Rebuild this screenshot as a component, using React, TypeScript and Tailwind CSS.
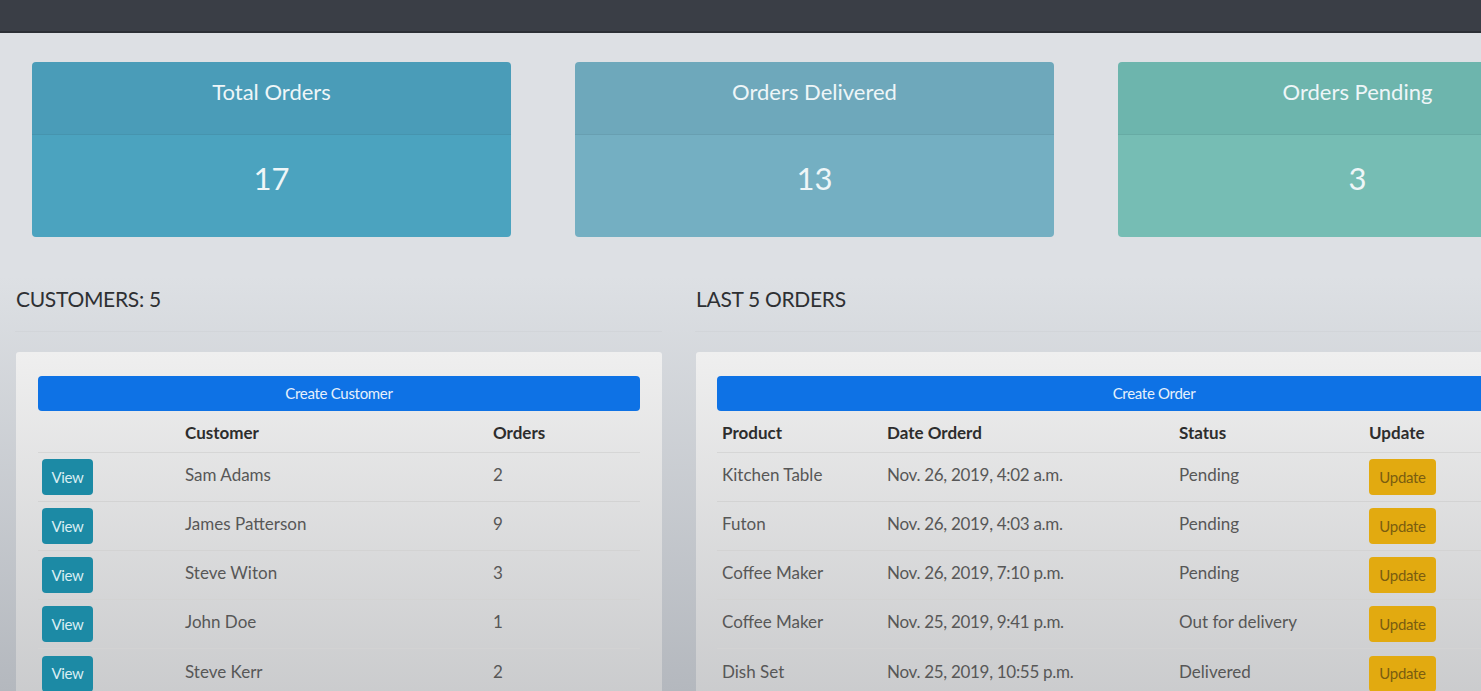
const stats = [
  { title: 'Total Orders', value: 17, head: 'bg-[#4a9cb8]', body: 'bg-[#4ba3bf]' },
  { title: 'Orders Delivered', value: 13, head: 'bg-[#6ea8bb]', body: 'bg-[#74afc2]' },
  { title: 'Orders Pending', value: 3, head: 'bg-[#6db5ad]', body: 'bg-[#76bdb4]' },
];

const customers = [
  { name: 'Sam Adams', orders: 2 },
  { name: 'James Patterson', orders: 9 },
  { name: 'Steve Witon', orders: 3 },
  { name: 'John Doe', orders: 1 },
  { name: 'Steve Kerr', orders: 2 },
];

const orders = [
  { product: 'Kitchen Table', date: 'Nov. 26, 2019, 4:02 a.m.', status: 'Pending' },
  { product: 'Futon', date: 'Nov. 26, 2019, 4:03 a.m.', status: 'Pending' },
  { product: 'Coffee Maker', date: 'Nov. 26, 2019, 7:10 p.m.', status: 'Pending' },
  { product: 'Coffee Maker', date: 'Nov. 25, 2019, 9:41 p.m.', status: 'Out for delivery' },
  { product: 'Dish Set', date: 'Nov. 25, 2019, 10:55 p.m.', status: 'Delivered' },
];

function SectionTitle({ children }: { children: string }) {
  return (
    <>
      <h5 className="pl-px text-[21px] leading-[24px] text-[#2e3033] tracking-[-0.3px]">{children}</h5>
      <div className="mt-[20px] h-px bg-[#d2d5d9]" />
    </>
  );
}

export default function App() {
  return (
    <div className="h-[691px] w-full overflow-hidden bg-[linear-gradient(to_bottom,#dde0e4_40%,#b4b8be)] font-['Lato','Liberation_Sans',sans-serif]">
      <nav className="h-[33px] bg-[#3a3e46] border-b-2 border-[#2c2f35]" />

      <div className="w-[1640px] px-[15px]">
        {/* stat cards */}
        <div className="flex gap-[64px] pt-[29px] pl-[17px]">
          {stats.map((s) => (
            <div key={s.title} className="w-[479px] shrink-0 rounded-[4px] overflow-hidden text-[#eef6f8]">
              <div className={`${s.head} h-[73px] pt-[16px] text-center text-[22px] leading-[28px] border-b border-black/5`}>
                {s.title}
              </div>
              <div className={`${s.body} h-[102px] pt-[27px] text-center text-[31px] leading-[32px]`}>
                {s.value}
              </div>
            </div>
          ))}
        </div>

        <div className="flex gap-[33px] mt-[50px]">
          {/* customers */}
          <div className="w-[647px] shrink-0">
            <SectionTitle>CUSTOMERS: 5</SectionTitle>
            <div className="mt-[20px] ml-px pt-[24px] px-[22px] pb-[20px] rounded-[3px] bg-[linear-gradient(to_bottom,#efefef,#c8c9cb)]">
              <button className="w-full h-[35px] rounded-[4px] bg-[#0e72e5] text-[15px] text-[#e6f0fc] tracking-[-0.3px]">
                Create Customer
              </button>
              <div className="grid grid-cols-[143px_308px_1fr] h-[42px] pt-[3px] items-center border-b border-[#d6d6d6] text-[17px] font-bold text-[#2d2d2d]">
                <div className="pl-1" />
                <div className="pl-1">Customer</div>
                <div className="pl-1">Orders</div>
              </div>
              {customers.map((c, i) => (
                <div
                  key={c.name}
                  className={`grid grid-cols-[143px_308px_1fr] h-[49px] items-center text-[17px] text-[#575757] ${i < customers.length - 1 ? 'border-b border-[#d3d3d3]' : ''}`}
                >
                  <div className="pl-1">
                    <button className="w-[51px] h-[36px] rounded-[4px] bg-[#1c8aa5] text-[15px] text-[#d9eef3] tracking-[-0.3px]">
                      View
                    </button>
                  </div>
                  <div className="pl-1 pb-[4px]">{c.name}</div>
                  <div className="pl-1 pb-[4px]">{c.orders}</div>
                </div>
              ))}
            </div>
          </div>

          {/* last orders */}
          <div className="w-[917px] shrink-0">
            <SectionTitle>LAST 5 ORDERS</SectionTitle>
            <div className="mt-[20px] ml-px pt-[24px] px-[21px] pb-[20px] rounded-[3px] bg-[linear-gradient(to_bottom,#efefef,#c8c9cb)]">
              <button className="w-full h-[35px] rounded-[4px] bg-[#0e72e5] text-[15px] text-[#e6f0fc] tracking-[-0.3px]">
                Create Order
              </button>
              <div className="grid grid-cols-[165px_292px_190px_1fr] h-[42px] pt-[3px] items-center border-b border-[#d6d6d6] text-[17px] font-bold text-[#2d2d2d]">
                <div className="pl-[5px]">Product</div>
                <div className="pl-[5px]">Date Orderd</div>
                <div className="pl-[5px]">Status</div>
                <div className="pl-[5px]">Update</div>
              </div>
              {orders.map((o, i) => (
                <div
                  key={o.date}
                  className={`grid grid-cols-[165px_292px_190px_1fr] h-[49px] items-center text-[17px] text-[#575757] ${i < orders.length - 1 ? 'border-b border-[#d3d3d3]' : ''}`}
                >
                  <div className="pl-[5px] pb-[4px]">{o.product}</div>
                  <div className="pl-[5px] pb-[4px] tracking-[-0.3px]">{o.date}</div>
                  <div className="pl-[5px] pb-[4px]">{o.status}</div>
                  <div className="pl-[5px]">
                    <button className="w-[67px] h-[36px] rounded-[4px] bg-[#e2aa10] text-[15px] text-[#7a5d10] tracking-[-0.3px]">
                      Update
                    </button>
                  </div>
                </div>
              ))}
            </div>
          </div>
        </div>
      </div>
    </div>
  );
}
